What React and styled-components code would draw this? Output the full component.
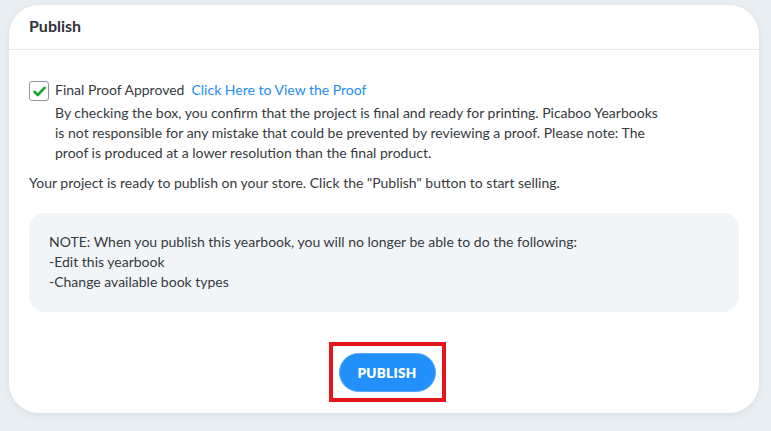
import React from 'react';
import styled, { createGlobalStyle } from 'styled-components';

const GlobalStyle = createGlobalStyle`
  html, body {
    margin: 0;
    padding: 0;
    background: #e8eef2;
    font-family: Lato, "Open Sans", sans-serif;
  }
`;

const Page = styled.div`
  width: 771px;
  height: 431px;
  padding: 5px 12px 0 9px;
  box-sizing: border-box;
`;

const Card = styled.section`
  background: #ffffff;
  border-radius: 30px;
  height: 408px;
  box-shadow: 0 2px 6px rgba(120, 140, 160, 0.15);
  display: flex;
  flex-direction: column;
`;

const Header = styled.header`
  height: 45px;
  padding: 0 20px 4px;
  box-sizing: border-box;
  display: flex;
  align-items: center;
  border-bottom: 1px solid #e6e9ec;
  h2 {
    margin: 0;
    font-size: 16px;
    font-weight: 700;
    color: #2f3237;
  }
`;

const Body = styled.div`
  padding: 30px 20px 0 20px;
  color: #363a40;
  font-size: 14px;
  line-height: 20px;
`;

const ApproveRow = styled.div`
  display: flex;
  gap: 6px;
`;

const Check = styled.span`
  flex: none;
  width: 18px;
  height: 18px;
  margin-top: 1px;
  border: 1px solid #8a969c;
  border-radius: 3px;
  display: flex;
  align-items: center;
  justify-content: center;
`;

const Link = styled.a`
  color: #1f8cf2;
  text-decoration: none;
  margin-left: 7px;
`;

const Disclaimer = styled.p`
  margin: 3px 0 0;
  max-width: 610px;
`;

const Ready = styled.p`
  margin: 10px 0 0;
`;

const Note = styled.div`
  margin-top: 20px;
  background: #f1f5f8;
  border-radius: 16px;
  padding: 19px 20px 19px 20px;
  height: 99px;
  box-sizing: border-box;
`;

const Footer = styled.div`
  display: flex;
  justify-content: center;
  padding: 30px 0 0 6px;
`;

const Highlight = styled.div`
  border: 4px solid #e3161d;
  padding: 7px 6px 6px 6px;
`;

const PublishButton = styled.button`
  display: block;
  width: 97px;
  height: 39px;
  border-radius: 20px;
  border: 1px solid #5aa9ff;
  background: #2190fb;
  color: #ffffff;
  font-family: Lato, sans-serif;
  font-size: 13.5px;
  font-weight: 800;
  letter-spacing: 0.3px;
  cursor: pointer;
`;

export default function App() {
  return (
    <>
      <GlobalStyle />
      <Page>
        <Card>
          <Header>
            <h2>Publish</h2>
          </Header>
          <Body>
            <ApproveRow>
              <Check>
                <svg width="13" height="11" viewBox="0 0 13 11">
                  <path d="M1.5 5.8 L4.8 9 L11.5 1.8" fill="none" stroke="#1aa52b" strokeWidth="2.6" strokeLinecap="round" strokeLinejoin="round" />
                </svg>
              </Check>
              <div>
                <div>
                  Final Proof Approved
                  <Link href="#">Click Here to View the Proof</Link>
                </div>
                <Disclaimer>
                  By checking the box, you confirm that the project is final and ready for printing. Picaboo Yearbooks
                  is not responsible for any mistake that could be prevented by reviewing a proof. Please note: The
                  proof is produced at a lower resolution than the final product.
                </Disclaimer>
              </div>
            </ApproveRow>
            <Ready>Your project is ready to publish on your store. Click the "Publish" button to start selling.</Ready>
            <Note>
              NOTE: When you publish this yearbook, you will no longer be able to do the following:
              <br />-Edit this yearbook
              <br />-Change available book types
            </Note>
          </Body>
          <Footer>
            <Highlight>
              <PublishButton>PUBLISH</PublishButton>
            </Highlight>
          </Footer>
        </Card>
      </Page>
    </>
  );
}
